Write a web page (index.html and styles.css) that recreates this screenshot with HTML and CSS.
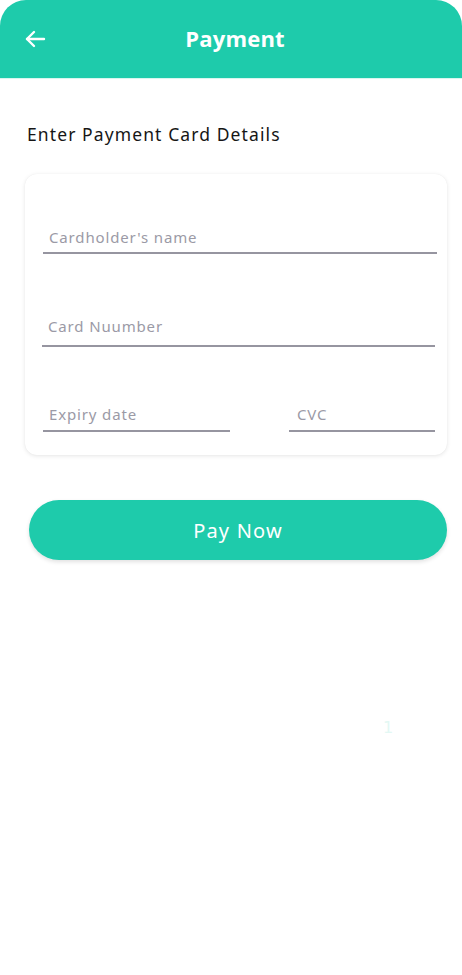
FILE: index.html
```html
<!DOCTYPE html>
<html>
<head>
<meta charset="utf-8">
<link rel="stylesheet" href="styles.css">
</head>
<body>
<div class="screen">
  <header class="topbar">
    <svg class="back" width="22" height="20" viewBox="0 0 22 20" fill="none" stroke="#fff" stroke-width="2.4" stroke-linecap="round" stroke-linejoin="round">
      <path d="M20 10H3"/><path d="M10 3L3 10l7 7"/>
    </svg>
    <h1 class="title">Payment</h1>
  </header>
  <main class="content">
    <p class="lead">Enter Payment Card Details</p>
    <section class="card">
      <div class="field f1"><span class="ph">Cardholder's name</span></div>
      <div class="field f2"><span class="ph">Card Nuumber</span></div>
      <div class="row">
        <div class="field f3"><span class="ph">Expiry date</span></div>
        <div class="field f4"><span class="ph">CVC</span></div>
      </div>
    </section>
    <button class="pay">Pay Now</button>
    <div class="ghost">1</div>
  </main>
</div>
</body>
</html>
```
FILE: styles.css
```css
* { box-sizing: border-box; }
html, body { margin: 0; padding: 0; background: #fff; }
body { font-family: "Noto Sans", "Open Sans", sans-serif; width: 462px; height: 975px; overflow: hidden; }
.screen { width: 462px; }
.topbar {
  height: 79px;
  background: #1ecbab;
  border-radius: 26px 26px 0 0;
  position: relative;
  display: flex;
  align-items: center;
  justify-content: center;
  border-bottom: 1px solid #d9f6ef;
}
.back { position: absolute; left: 24px; top: 29px; }
.title {
  margin: 0;
  color: #fff;
  font-family: "Open Sans", sans-serif;
  font-weight: 700;
  font-size: 22px;
  letter-spacing: 0.2px;
  margin-left: 8px;
  margin-top: -3px;
}
.content { padding: 0 15px 0 25px; }
.lead {
  margin: 44px 0 0 2px;
  font-size: 17.5px;
  color: #161616;
  letter-spacing: 1.1px;
  line-height: 22px;
}
.card {
  margin-top: 29px;
  width: 422px;
  height: 281px;
  border-radius: 12px;
  background: #fff;
  box-shadow: 0 1px 4px rgba(0,0,0,0.10), 0 0 1px rgba(0,0,0,0.06);
  padding: 0 10px 0 18px;
  display: flex;
  flex-direction: column;
}
.field {
  border-bottom: 2px solid #9695a0;
  display: flex;
  align-items: flex-end;
}
.ph {
  font-size: 15px;
  line-height: 18px;
  color: #9b9aa6;
  letter-spacing: 0.85px;
  padding-left: 6px;
}
.f1 { margin-top: 51px; height: 29px; padding-bottom: 6px; }
.f2 { margin-top: 63px; margin-left: -1px; margin-right: 2px; height: 30px; padding-bottom: 10px; }
.row { display: flex; margin-top: 51px; }
.f3 { width: 187px; height: 34px; padding-bottom: 7px; }
.f4 { width: 146px; margin-left: 59px; height: 34px; padding-bottom: 7px; }
.f4 .ph { padding-left: 8px; }
.pay {
  display: block;
  margin: 45px 0 0 4px;
  width: 418px;
  height: 60px;
  border: none;
  border-radius: 30px;
  background: #1ecbab;
  color: #fff;
  font-family: "Noto Sans", sans-serif;
  font-size: 20px;
  letter-spacing: 1.2px;
  box-shadow: 0 2px 4px rgba(0,0,0,0.12);
}
.ghost {
  margin: 158px 0 0 358px;
  font-size: 16px;
  color: #e3f8f4;
  font-family: "DejaVu Sans", sans-serif;
}
```
